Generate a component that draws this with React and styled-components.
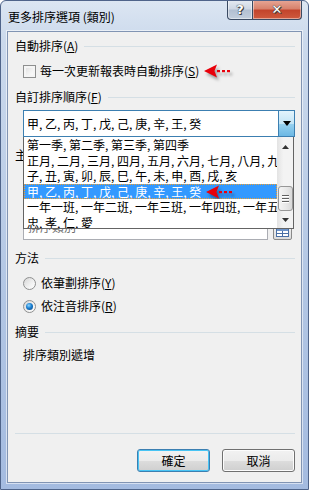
import React from 'react';
import styled, { createGlobalStyle } from 'styled-components';

const GlobalStyle = createGlobalStyle`
  html, body {
    margin: 0;
    padding: 0;
    background: #ffffff;
  }
  body {
    font-family: "Noto Sans CJK TC", "Liberation Sans", sans-serif;
    font-size: 12px;
    color: #000;
  }
`;

const Window = styled.div`
  width: 309px;
  height: 490px;
  box-sizing: border-box;
  border: 1px solid #4f648a;
  border-radius: 6px 6px 0 0;
  background: linear-gradient(180deg, #dce6f2 0px, #cbd9ec 40px, #b2c6e4 60%, #a4bbe0 100%);
  display: flex;
  flex-direction: column;
  overflow: hidden;
`;

const TitleBar = styled.div`
  height: 30px;
  display: flex;
  align-items: flex-start;
  padding-left: 7px;
`;

const TitleText = styled.div`
  margin-top: 8px;
  font-size: 12px;
  line-height: 16px;
  color: #000;
`;

const CaptionButtons = styled.div`
  margin-left: auto;
  margin-right: 6px;
  margin-top: -1px;
  display: flex;
`;

const CaptionButton = styled.div`
  width: ${p => p.$w}px;
  height: 20px;
  box-sizing: border-box;
  border: 1px solid #3a4a62;
  border-top: none;
  border-radius: ${p => p.$radius};
  background: ${p => p.$close
    ? 'linear-gradient(180deg, #e8a897 0%, #d8826d 45%, #c3442c 55%, #cf5a3e 100%)'
    : 'linear-gradient(180deg, #e6ebf2 0%, #cfd8e4 45%, #b3c0d2 55%, #c2cedc 100%)'};
  display: flex;
  align-items: center;
  justify-content: center;
  box-shadow: inset 0 0 0 1px rgba(255,255,255,0.45);
  & + & {
    border-left: none;
  }
`;

const CaptionGlyph = styled.span`
  font-family: "DejaVu Sans", sans-serif;
  font-weight: bold;
  font-size: ${p => p.$size}px;
  line-height: 1;
  color: #fff;
  text-shadow: 0 0 1px #333, 0 0 1px #333, 1px 1px 0 #444;
`;

const Client = styled.div`
  margin: 0 6px;
  height: 452px;
  box-sizing: border-box;
  border: 1px solid #8194b3;
  background: #f0f0f0;
  box-shadow: 0 0 0 1px rgba(255,255,255,0.55);
  display: flex;
  flex-direction: column;
  padding: 0 6px 10px 7px;
`;

const GroupHeader = styled.div`
  display: flex;
  align-items: center;
  height: 16px;
  line-height: 16px;
  margin-top: ${p => p.$mt}px;
  &::after {
    content: '';
    flex: 1;
    height: 1px;
    background: #d5dfe5;
    margin-left: 6px;
  }
`;

const HiddenHeader = styled.div`
  height: 16px;
  line-height: 16px;
  margin-top: 10px;
`;

const OptionRow = styled.label`
  display: flex;
  align-items: center;
  height: 16px;
  line-height: 16px;
  margin-top: ${p => p.$mt}px;
  padding-left: 8px;
`;

const CheckBox = styled.span`
  width: 13px;
  height: 13px;
  box-sizing: border-box;
  border: 1px solid #8e8f8f;
  background: linear-gradient(135deg, #dcdcdc 0%, #f4f4f4 60%, #ffffff 100%);
  box-shadow: inset 0 0 0 2px #f5f5f5;
  margin-right: 4px;
`;

const Radio = styled.span`
  width: 13px;
  height: 13px;
  box-sizing: border-box;
  border-radius: 50%;
  border: 1px solid #8e8f8f;
  background: linear-gradient(135deg, #d6d6d6 0%, #f2f2f2 60%, #ffffff 100%);
  margin-right: 5px;
  display: flex;
  align-items: center;
  justify-content: center;
  &::after {
    content: '';
    display: ${p => (p.$checked ? 'block' : 'none')};
    width: 7px;
    height: 7px;
    border-radius: 50%;
    background: radial-gradient(circle at 40% 35%, #8fd6ff 0%, #1a7fd0 45%, #0b3f7a 100%);
  }
`;

const Underline = styled.span`
  text-decoration: underline;
`;

const ComboWrap = styled.div`
  position: relative;
  margin-top: 5px;
  margin-left: 8px;
  z-index: 2;
`;

const Combo = styled.div`
  height: 27px;
  box-sizing: border-box;
  border: 1px solid #3c7fb1;
  border-right: none;
  background: #fff;
  display: flex;
  align-items: center;
`;

const ComboText = styled.div`
  flex: 1;
  padding-left: 3px;
  line-height: 16px;
  white-space: nowrap;
`;

const ComboButton = styled.div`
  width: 17px;
  height: 27px;
  box-sizing: border-box;
  margin-top: -1px;
  border: 1px solid #3c7fb1;
  background: linear-gradient(180deg, #e3f4fc 0%, #c4e5f6 50%, #98d1ef 51%, #6cb8e4 100%);
  display: flex;
  align-items: center;
  justify-content: center;
`;

const DropList = styled.div`
  position: absolute;
  top: 27px;
  left: 0;
  right: 1px;
  height: 92px;
  box-sizing: border-box;
  border: 1px solid #646464;
  border-top: none;
  background: #fff;
  display: flex;
`;

const Items = styled.div`
  flex: 1;
  overflow: hidden;
`;

const Item = styled.div`
  height: 15.6px;
  line-height: 15.6px;
  padding-left: 3px;
  white-space: nowrap;
  overflow: hidden;
  display: flex;
  align-items: center;
  box-sizing: border-box;
  background: ${p => (p.$selected ? '#3399ff' : 'transparent')};
  color: ${p => (p.$selected ? '#fff' : '#000')};
  outline: ${p => (p.$selected ? '1px dotted #f0a030' : 'none')};
  outline-offset: -1px;
`;

const ScrollBar = styled.div`
  width: 16px;
  background: linear-gradient(90deg, #e3e3e3 0%, #f3f3f3 40%, #f3f3f3 100%);
  display: flex;
  flex-direction: column;
  align-items: center;
`;

const ScrollArrow = styled.div`
  height: 16px;
  display: flex;
  align-items: center;
  justify-content: center;
  margin-top: ${p => p.$mt || 0}px;
`;

const Thumb = styled.div`
  width: 15px;
  height: 25px;
  box-sizing: border-box;
  border: 1px solid #979797;
  border-radius: 3px;
  background: linear-gradient(90deg, #f4f4f4 0%, #e9e9e9 50%, #d9d9d9 100%);
  margin-top: 31px;
  display: flex;
  flex-direction: column;
  align-items: center;
  justify-content: center;
  gap: 2px;
`;

const Grip = styled.span`
  width: 7px;
  height: 1px;
  background: #606060;
  box-shadow: 0 1px 0 #fff;
`;

const HiddenFieldRow = styled.div`
  display: flex;
  align-items: flex-end;
  margin-top: 5px;
  margin-left: 8px;
  margin-right: 3px;
  gap: 5px;
`;

const HiddenField = styled.div`
  flex: 1;
  height: 72px;
  box-sizing: border-box;
  border: 1px solid #abadb3;
  background: #fff;
  color: #6d6d6d;
  display: flex;
  align-items: flex-end;
  padding: 0 0 5px 4px;
  line-height: 14px;
`;

const RangeButton = styled.div`
  width: 19px;
  height: 16px;
  box-sizing: border-box;
  border: 1px solid #8a8a8a;
  border-radius: 2px;
  background: linear-gradient(180deg, #f5f5f5, #dcdcdc);
  display: flex;
  align-items: center;
  justify-content: center;
`;

const SummaryText = styled.div`
  height: 16px;
  line-height: 16px;
  margin-top: 7px;
  padding-left: 8px;
`;

const Spacer = styled.div`
  flex: 1;
`;

const Divider = styled.div`
  height: 1px;
  background: #d5dfe5;
`;

const ButtonRow = styled.div`
  display: flex;
  justify-content: flex-end;
  gap: 12px;
  margin-top: 15px;
`;

const PushButton = styled.div`
  width: 73px;
  height: 23px;
  box-sizing: border-box;
  border: 1px solid ${p => (p.$focused ? '#3c7fb1' : '#707070')};
  border-radius: 3px;
  background: linear-gradient(180deg, #f2f2f2 0%, #ebebeb 50%, #dddddd 51%, #cfcfcf 100%);
  box-shadow: inset 0 0 0 1px ${p => (p.$focused ? '#48c4f4' : '#fcfcfc')};
  display: flex;
  align-items: center;
  justify-content: center;
  line-height: 16px;
`;

const ArrowSvg = styled.svg`
  margin-left: 5px;
  filter: drop-shadow(2px 3px 1.5px rgba(0, 0, 0, 0.35));
  flex-shrink: 0;
`;

const RedArrow = () => (
  <ArrowSvg width="28" height="14" viewBox="0 0 28 14">
    <path d="M0 7 L13 0.5 L10.5 7 L13 13.5 Z" fill="#e8000a" />
    <rect x="13" y="6" width="3" height="2.2" fill="#e8000a" />
    <rect x="18" y="6" width="3" height="2.2" fill="#e8000a" />
    <rect x="23" y="6" width="3" height="2.2" fill="#e8000a" />
  </ArrowSvg>
);

const lists = [
  '第一季, 第二季, 第三季, 第四季',
  '正月, 二月, 三月, 四月, 五月, 六月, 七月, 八月, 九月, 十月',
  '子, 丑, 寅, 卯, 辰, 巳, 午, 未, 申, 酉, 戌, 亥',
  '甲, 乙, 丙, 丁, 戊, 己, 庚, 辛, 王, 癸',
  '一年一班, 一年二班, 一年三班, 一年四班, 一年五班',
  '忠, 孝, 仁, 愛',
];

export default function App() {
  return (
    <>
      <GlobalStyle />
      <Window>
        <TitleBar>
          <TitleText>更多排序選項 (類別)</TitleText>
          <CaptionButtons>
            <CaptionButton $w={26} $radius="0 0 0 4px">
              <CaptionGlyph $size={13}>?</CaptionGlyph>
            </CaptionButton>
            <CaptionButton $w={49} $radius="0 0 4px 0" $close>
              <CaptionGlyph $size={13}>✕</CaptionGlyph>
            </CaptionButton>
          </CaptionButtons>
        </TitleBar>
        <Client>
          <GroupHeader $mt={6}>自動排序(<Underline>A</Underline>)</GroupHeader>
          <OptionRow $mt={9}>
            <CheckBox />
            每一次更新報表時自動排序(<Underline>S</Underline>)
            <RedArrow />
          </OptionRow>
          <GroupHeader $mt={10}>自訂排序順序(<Underline>F</Underline>)</GroupHeader>
          <ComboWrap>
            <Combo>
              <ComboText>甲, 乙, 丙, 丁, 戊, 己, 庚, 辛, 王, 癸</ComboText>
              <ComboButton>
                <svg width="8" height="5" viewBox="0 0 8 5">
                  <path d="M0 0 H8 L4 5 Z" fill="#000" />
                </svg>
              </ComboButton>
            </Combo>
            <DropList>
              <Items>
                {lists.map((t, i) => (
                  <Item key={i} $selected={i === 3}>
                    {t}
                    {i === 3 && <RedArrow />}
                  </Item>
                ))}
              </Items>
              <ScrollBar>
                <ScrollArrow $mt={2}>
                  <svg width="7" height="4" viewBox="0 0 7 4">
                    <path d="M0 4 H7 L3.5 0 Z" fill="#333" />
                  </svg>
                </ScrollArrow>
                <Thumb>
                  <Grip />
                  <Grip />
                  <Grip />
                </Thumb>
                <Spacer />
                <ScrollArrow>
                  <svg width="7" height="4" viewBox="0 0 7 4">
                    <path d="M0 0 H7 L3.5 4 Z" fill="#333" />
                  </svg>
                </ScrollArrow>
              </ScrollBar>
            </DropList>
          </ComboWrap>
          <HiddenHeader>主</HiddenHeader>
          <HiddenFieldRow>
            <HiddenField>排序類別</HiddenField>
            <RangeButton>
              <svg width="13" height="9" viewBox="0 0 13 9">
                <rect x="0.5" y="0.5" width="12" height="8" fill="#fff" stroke="#4a6fa5" />
                <rect x="1" y="1" width="11" height="2" fill="#6d93c8" />
                <path d="M1 5.5 H12 M6.5 3 V8.5" stroke="#4a6fa5" strokeWidth="1" />
              </svg>
            </RangeButton>
          </HiddenFieldRow>
          <GroupHeader $mt={10}>方法</GroupHeader>
          <OptionRow $mt={9}>
            <Radio />
            依筆劃排序(<Underline>Y</Underline>)
          </OptionRow>
          <OptionRow $mt={7}>
            <Radio $checked />
            依注音排序(<Underline>R</Underline>)
          </OptionRow>
          <GroupHeader $mt={10}>摘要</GroupHeader>
          <SummaryText>排序類別遞增</SummaryText>
          <Spacer />
          <Divider />
          <ButtonRow>
            <PushButton $focused>確定</PushButton>
            <PushButton>取消</PushButton>
          </ButtonRow>
        </Client>
      </Window>
    </>
  );
}
